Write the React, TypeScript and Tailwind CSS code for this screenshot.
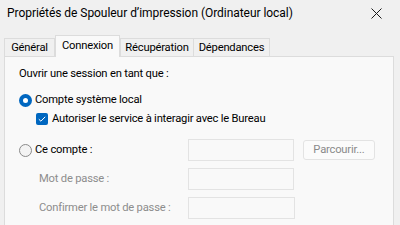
import React from 'react';

const font = { fontFamily: 'Roboto, "Liberation Sans", Arial, sans-serif' };

const Tab = ({ label, w, active }: { label: string; w: string; active?: boolean }) =>
  active ? (
    <div className={`${w} relative z-10 -mb-px h-[22px] pt-[2px] bg-[#f9f9f9] border border-b-0 border-[#dcdcdc] text-center leading-[16px]`}>
      {label}
    </div>
  ) : (
    <div className={`${w} h-[18px] bg-[#f0f0f0] border border-b-0 border-[#dcdcdc] text-center leading-[17px]`}>
      {label}
    </div>
  );

const Field = ({ w = 'w-[106px]' }: { w?: string }) => (
  <div className={`${w} h-[22px] border border-[#e3e3e3] bg-[#f9f9f9]`} />
);

export default function App() {
  return (
    <div className="w-[400px] h-[225px] bg-[#f0f0f0] overflow-hidden select-none text-[11.2px] text-black tracking-[-0.2px]" style={font}>
      {/* Title bar */}
      <div className="h-[26px] flex items-center justify-between pl-[7px] pr-[18px]">
        <span className="text-[12px] leading-[16px] tracking-[-0.05px]">
          Propriétés de Spouleur d’impression (Ordinateur local)
        </span>
        <svg width="11" height="11" viewBox="0 0 11 11">
          <path d="M0.5 0.5L10.5 10.5M10.5 0.5L0.5 10.5" stroke="#1a1a1a" strokeWidth="1" />
        </svg>
      </div>

      {/* Tabs */}
      <div className="mt-[9px] pl-[4px] flex items-end">
        <Tab label="Général" w="w-[51px]" />
        <Tab label="Connexion" w="w-[65px]" active />
        <Tab label="Récupération" w="w-[74px]" />
        <Tab label="Dépendances" w="w-[77px] -ml-px" />
      </div>

      {/* Panel */}
      <div className="ml-[4px] w-[390px] h-[200px] bg-[#f9f9f9] border border-[#dcdcdc] pl-[14px] pt-[9px] leading-[16px]">
        <div className="h-[16px]">Ouvrir une session en tant que :</div>

        <div className="mt-[10px] h-[16px] flex items-center gap-[3px]">
          <span className="w-[13px] h-[13px] rounded-full bg-[#0067c0] flex items-center justify-center">
            <span className="w-[5px] h-[5px] rounded-full bg-white" />
          </span>
          <span>Compte système local</span>
        </div>

        <div className="mt-[3px] h-[16px] ml-[17px] flex items-center gap-[4px]">
          <span className="w-[12px] h-[12px] rounded-[2px] bg-[#0067c0] flex items-center justify-center">
            <svg width="8" height="6" viewBox="0 0 8 6">
              <path d="M0.8 3.2L2.9 5.2L7.2 0.8" fill="none" stroke="white" strokeWidth="1" />
            </svg>
          </span>
          <span>Autoriser le service à interagir avec le Bureau</span>
        </div>

        <div className="mt-[12px] h-[22px] flex items-center">
          <div className="w-[169px] flex items-center gap-[3px]">
            <span className="w-[13px] h-[13px] rounded-full border border-[#8a8a8a] bg-[#f3f3f3]" />
            <span>Ce compte :</span>
          </div>
          <Field />
          <div className="ml-[9px] w-[72px] h-[20px] rounded-[3px] border border-[#e3e3e3] bg-[#fbfbfb] flex items-center justify-center text-[#8a8a8a]">
            Parcourir...
          </div>
        </div>

        <div className="mt-[7px] h-[22px] flex items-center">
          <div className="w-[169px] pl-[20px] text-[#8d8d8d]">Mot de passe :</div>
          <Field />
        </div>

        <div className="mt-[7px] h-[22px] flex items-center">
          <div className="w-[169px] pl-[20px] text-[#8d8d8d]">Confirmer le mot de passe :</div>
          <Field w="w-[107px]" />
        </div>
      </div>
    </div>
  );
}
